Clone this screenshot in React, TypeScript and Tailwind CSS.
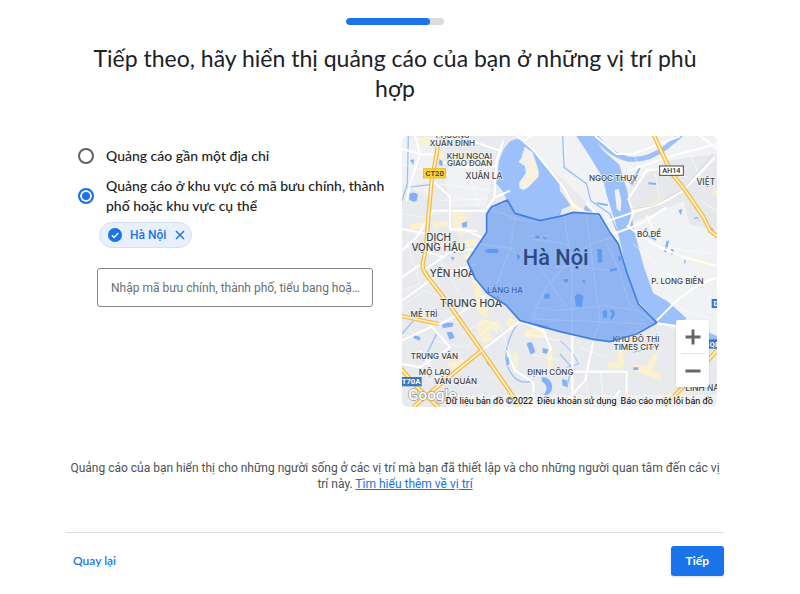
import { useState } from "react";

const labels = [
  { text: "PHƯỜNG", x: 158, y: 12, size: 23 },
  { text: "XUÂN ĐỈNH", x: 157, y: 35, size: 24 },
  { text: "KHU NGOẠI", x: 208, y: 74, size: 24 },
  { text: "GIAO ĐOÀN", x: 209, y: 96, size: 24 },
  { text: "XUÂN LA", x: 252, y: 134, size: 25 },
  { text: "NGỌC THỤY", x: 640, y: 141, size: 24 },
  { text: "VIỆT H", x: 930, y: 152, size: 25 },
  { text: "BỒ ĐỀ", x: 747, y: 308, size: 24 },
  { text: "DỊCH", x: 116, y: 320, size: 30 },
  { text: "VỌNG HẬU", x: 115, y: 350, size: 30 },
  { text: "YÊN HOÀ", x: 157, y: 429, size: 30 },
  { text: "TRUNG HOÀ", x: 213, y: 518, size: 31 },
  { text: "LÁNG HẠ", x: 315, y: 476, size: 24 },
  { text: "MỄ TRÌ", x: 72, y: 550, size: 24 },
  { text: "P. LONG BIÊN", x: 832, y: 449, size: 24 },
  { text: "TRUNG VĂN", x: 103, y: 676, size: 24 },
  { text: "MỘ LAO", x: 104, y: 723, size: 24 },
  { text: "VĂN QUÁN", x: 167, y: 750, size: 24 },
  { text: "ĐỊNH CÔNG", x: 451, y: 723, size: 24 },
  { text: "KHU ĐÔ THỊ", x: 708, y: 625, size: 24 },
  { text: "TIMES CITY", x: 709, y: 647, size: 24 },
  { text: "LINH NAM", x: 918, y: 771, size: 25 },
];

const streets = [
  "M6 45 L70 62 L112 60",
  "M45 6 L60 60 L30 150 L20 200",
  "M180 6 L240 30 L300 50",
  "M128 84 L180 100 L290 96",
  "M98 140 L150 188 L150 285 L232 292",
  "M88 230 L262 230",
  "M310 20 L290 80 L286 130 L284 190 L258 225",
  "M286 190 L330 170",
  "M6 285 L82 300 L82 355 L135 370",
  "M150 288 L190 285 L245 310",
  "M6 350 L50 310 L100 230",
  "M60 392 L6 430 M70 410 L150 355 L220 345",
  "M6 500 L110 425 L230 390",
  "M120 570 L170 545 L262 480",
  "M6 620 L90 580 L115 568",
  "M6 690 L60 700 L150 640 L80 560",
  "M60 650 L120 740 L190 700",
  "M245 650 L360 562 L430 590 L455 650",
  "M320 650 L345 710 L400 745 L400 819",
  "M517 590 L517 819 M517 713 L680 713 L680 780",
  "M580 622 L555 740 L500 800",
  "M660 770 L620 819",
  "M770 566 L720 590 L660 625",
  "M352 6 L400 48 L450 110 L490 160 L520 215 L560 235 L600 240",
  "M372 20 L395 6",
  "M610 265 L700 235 L790 205 L850 170 L945 70",
  "M640 300 L720 270 L800 220",
  "M560 205 L605 260 L645 310",
  "M685 280 L700 235 L685 195 L740 110 L780 105",
  "M680 112 L800 70 L951 30",
  "M585 6 L650 60 L700 60 L840 6",
  "M900 6 L951 45",
  "M680 275 L760 330 L850 370 L951 395",
  "M740 245 L775 320",
  "M770 560 L830 500 L900 450 L951 430",
  "M850 440 L800 420",
  "M770 568 L830 576 L951 640",
];

const innerStreets = [
  "M265 225 L315 240 L345 255 L420 265 L470 252",
  "M240 330 L345 345 M350 230 L330 345 L290 450",
  "M385 305 L440 310 M400 315 L500 330 L510 345",
  "M465 400 L520 395 L640 410",
  "M398 560 L410 520 L440 460 L500 390 L570 330 L640 310",
  "M385 350 L480 490 L500 520",
  "M515 590 L515 400 L495 255",
  "M580 615 L600 560 L560 250",
  "M620 330 L650 390 L690 510 L760 565",
  "M400 520 L470 530 L620 515 L715 530",
  "M400 555 L520 560 L740 570",
  "M600 245 L640 320",
];

const highways = [
  "M117 0 L110 60 L95 140 L85 250 L78 340 L68 390 Q66 408 86 432 L150 515 L245 650 L345 795 L360 819",
  "M0 545 L115 570",
  "M243 651 L130 743 L40 819",
  "M0 700 L50 758 L115 819",
  "M760 0 L782 48 L815 118 L855 168 L910 248 L930 290 L960 312",
  "M960 640 L860 748 L790 819",
];

const blocks =
  "M55 10 l25 -4 l8 22 l-25 8z M110 55 l22 5 l-6 25 l-18 -5z M170 85 l40 8 l-4 14 l-35 -6z " +
  "M30 270 l50 -8 l2 16 l-50 10z M100 265 l45 -5 l0 16 l-45 5z M160 235 l30 -6 l12 30 l-22 18 l18 20 l-18 10 l-22 -28z " +
  "M180 325 l48 -12 l2 18 l-48 14z M190 365 l20 -10 l12 20 l-20 14z M215 430 l18 4 l15 50 l20 28 l-10 42 l-26 -22z " +
  "M230 585 l10 -30 l60 10 l-6 30 l-24 -10 l-10 20 l-20 0z M240 610 l30 -12 l8 18 l-30 14z " +
  "M320 550 l25 6 l-5 34 l-18 -14z M372 590 l45 -8 l28 14 l-8 16 l-62 -2z M440 640 l14 -4 l6 80 l-14 4z " +
  "M340 650 l15 10 l0 50 l-15 -10z M140 690 l50 -14 l14 16 l-44 16z M388 50 l24 40 l2 40 l-24 24 l-20 0 l28 -44z " +
  "M425 80 l16 10 l50 65 l-10 8z M480 180 l30 12 l40 40 l-4 6 l-30 -8 l-26 -30z M700 225 l60 -17 l4 8 l-60 17z " +
  "M760 205 l35 -12 l2 10 l-34 12z M940 165 l12 4 l0 16 l-12 -2z M880 370 l50 12 l-2 14 l-50 -12z " +
  "M655 645 l40 -20 l10 14 l-40 24 l10 30 l-18 14 l-36 -8 l4 -16 l28 2z M700 690 l38 8 l24 -40 l14 8 l-20 38 l30 22 l-4 14 l-78 -30z " +
  "M772 782 l80 -6 l10 30 l-88 8z M380 795 l50 0 l0 24 l-50 0z M500 790 l40 -4 l0 33 l-36 0z";

const ponds =
  "M28 180 q12 -10 26 2 l-4 18 l-8 4 l-14 -6z M118 75 l12 8 l-4 14 l-10 -6z M30 78 l12 -2 l-2 18z M185 268 l16 -6 l0 16 l-12 4z " +
  "M152 368 l12 2 l-6 10z M125 572 q20 -10 36 -4 l-4 10 l-28 4z M140 595 l16 -2 l8 18 l-16 6z M42 602 l20 8 l-4 10 l-18 -8z " +
  "M380 630 q12 -12 18 0 l8 24 l-14 8z M428 642 l18 4 l-6 14 l-12 -4z M425 730 q26 -2 32 28 q-4 28 -26 26 q20 -26 -6 -42z " +
  "M316 670 l10 0 l2 22 l-8 2z M262 670 l8 4 l-2 22 l-8 -8z M486 735 l14 4 l4 20 l-16 -4z M700 700 l16 0 l-2 8 l-14 0z " +
  "M745 145 l24 2 l-2 6 l-22 -2z M690 150 l30 -55 l4 2 l-26 55z M835 230 l12 -6 l-4 20z M880 255 q14 -16 20 10 l-6 -12z " +
  "M800 320 l8 0 l-10 36 l-6 -4z M812 345 l8 0 l2 16 l-8 0z M852 378 l6 2 l-4 12z M590 205 l35 6 l-4 5 l-30 -6z " +
  "M918 265 l24 24 l-4 4 l-22 -22z M740 300 l30 15 l-2 5 l-30 -14z";

const innerPonds =
  "M255 348 q24 -8 42 0 l-4 10 l-36 -2z M350 360 l12 6 l-8 14z M405 305 l14 0 l0 8 l-12 0z M425 308 l14 2 l-2 8z " +
  "M432 485 q10 -14 18 -2 l-4 12 l-14 -2z M592 345 l12 0 l4 38 l-14 4z M524 490 l8 -12 l18 8 l-4 34 l-18 -4z " +
  "M630 528 q16 -4 14 14 l-10 16 l-4 -4 l6 -14z M608 532 l12 -4 l2 22 l-12 2z M545 438 l12 2 l-4 10z M630 405 l20 -4 l2 8 l-22 4z " +
  "M490 435 l14 0 l0 10 l-12 0z M405 568 l40 10 l-4 6 l-36 -10z M655 365 l8 4 l-2 12 l-6 -2z";

const areaOutline =
  "M322 198 L345 238 L420 260 L480 247 L520 235 L597 240 L630 295 L655 330 L680 415 L715 510 L770 566 L710 600 L630 623 L580 616 L480 593 L360 560 L318 513 L262 478 L225 433 L202 382 L260 295 L260 240 L275 218 Z";

function CityMap() {
  return (
    <svg viewBox="6 6 945 813" className="block w-full" role="img" aria-label="Hà Nội">
      <rect x="0" y="0" width="960" height="830" fill="#e8eaed" />
      <path d="M345 0 L960 0 L960 640 L770 565 L660 330 L600 240 L480 130 Z" fill="#f1f2f4" />
      <path d="M690 150 L800 80 L951 60 L951 290 L870 270 L850 200 L690 270 Z" fill="#e6e8eb" />
      <path d="M6 10 L120 10 L90 190 L6 150 Z M130 100 L280 90 L258 220 L150 220 Z" fill="#f0f1f4" />
      <path d={blocks} fill="#fcf1cf" />

      <g fill="#9bc0fa">
        <path d="M350 14 L330 22 L312 44 L297 80 L292 130 L288 148 L306 168 L322 200 L345 238 L420 260 L480 247 L486 225 L512 215 L495 190 L480 172 L478 140 L436 96 L410 62 L376 22 Z" />
        <path d="M548 234 L556 214 L578 234 Z" />
        <path d="M525 0 L565 60 L607 130 L622 190 L645 260 L662 330 L680 415 L715 503 L770 565 L832 575 L860 553 L800 500 L760 478 L748 445 L732 400 L705 300 L692 230 L682 170 L658 92 L610 50 L575 0 Z" />
        <path d="M925 595 L951 606 L951 650 L925 630 Z" />
        <path d={ponds} fill="#86b1f5" />
      </g>
      <path
        d="M374 38 L398 55 L416 110 L416 128 L385 160 L370 168 L358 162 L358 145 L378 116 L374 96 L356 84 L364 72 Z"
        fill="#eff0f2"
      />
      <path d="M386 60 L408 96 L410 126 L376 156 L366 150 L390 116 Z" fill="#fbf2d8" />
      <path d="M644 168 L656 165 L664 200 L662 234 L650 225 Z" fill="#f1f2f4" />
      <g fill="none" stroke="#9bc0fa">
        <path d="M582 0 Q625 60 680 74 Q740 84 800 38 L845 0" strokeWidth="15" />
        <path d="M488 6 L492 100 L560 150 L572 200 L630 240 L650 290" strokeWidth="4" />
        <path d="M25 6 L22 150 L6 200 M22 160 L90 152 M40 560 L6 600 M110 600 L70 680" strokeWidth="4" />
        <path d="M355 565 Q310 630 320 690 Q345 760 400 740 M480 660 L515 700 L500 760" strokeWidth="4" />
        <path d="M700 655 L760 640 L770 600 M480 620 Q520 650 535 690 L500 700" strokeWidth="3" />
      </g>

      <g fill="none" stroke="#ffffff" strokeWidth="6" strokeLinejoin="round">
        {streets.map((d) => (
          <path key={d} d={d} />
        ))}
      </g>
      <g fill="none" stroke="#ffffff" strokeWidth="2" opacity="0.8">
        <path d="M6 90 L80 110 M120 150 L280 170 M120 200 L260 195 M200 100 L240 220 M6 240 L80 250 M20 320 L60 450 L6 470 M120 380 L180 480 M6 520 L70 470 L130 490 M180 600 L260 560 M100 620 L190 640 M200 640 L290 560 M300 580 L340 680 M270 740 L330 690 M380 600 L480 620 M390 660 L480 680 M540 640 L620 670 M560 700 L560 800 M600 710 L610 800 M700 60 L720 100 L860 130 M760 90 L780 200 M870 60 L900 130 M900 200 L951 230 M700 330 L780 400 M790 340 L951 360 M790 470 L850 530 L951 560" />
      </g>
      <path d="M690 225 L760 215 L850 165 L940 60" fill="none" stroke="#cfd2d7" strokeWidth="2" />

      <g fill="none" strokeLinejoin="round">
        {highways.map((d) => (
          <g key={d}>
            <path d={d} stroke="#f8ba42" strokeWidth="13" />
            <path d={d} stroke="#fff3d0" strokeWidth="5" />
          </g>
        ))}
      </g>

      <g
        fontFamily="Inter, Roboto, sans-serif"
        fontWeight="500"
        textAnchor="middle"
        fill="#3f4348"
        stroke="#f5f6f7"
        strokeWidth="4"
        paintOrder="stroke"
      >
        {labels.map((label) => (
          <text key={label.text} x={label.x} y={label.y} fontSize={label.size}>
            {label.text}
          </text>
        ))}
      </g>

      <path d={areaOutline} fill="#4285f4" fillOpacity="0.53" />
      <g fill="none" stroke="#a3c4f6" strokeWidth="4" opacity="0.6">
        {innerStreets.map((d) => (
          <path key={d} d={d} />
        ))}
      </g>
      <path d={innerPonds} fill="#6099f0" />
      <path d={areaOutline} fill="none" stroke="#4080e2" strokeWidth="5" strokeLinejoin="round" />

      <g fontFamily="Roboto, sans-serif" fontWeight="500" textAnchor="middle">
        <text x="467" y="392" fontSize="65" fill="#2b4a80">
          Hà Nội
        </text>
        <rect x="70" y="104" width="67" height="28" fill="#fbd22e" stroke="#d9b31c" strokeWidth="2" />
        <text x="104" y="126" fontSize="23" fill="#3b3a2c">
          CT20
        </text>
        <rect x="779" y="96" width="71" height="28" fill="#ffffff" stroke="#4a4a4a" strokeWidth="3" />
        <text x="814" y="118" fontSize="22" fill="#303030">
          AH14
        </text>
        <g fill="#3a78c3">
          <rect x="0" y="729" width="65" height="28" />
          <rect x="935" y="495" width="30" height="27" />
          <rect x="922" y="616" width="40" height="28" />
        </g>
        <g fill="#ffffff" fontSize="23" fontWeight="700">
          <text x="33" y="751">
            T70A
          </text>
          <text x="948" y="517">
            D
          </text>
          <text x="943" y="638">
            QL
          </text>
        </g>
        <text x="97" y="799" fontSize="46" fill="#ffffff" stroke="#8f9296" strokeWidth="4" paintOrder="stroke">
          Google
        </text>
      </g>
    </svg>
  );
}

function MapPanel() {
  return (
    <div className="relative overflow-hidden rounded-md">
      <CityMap />
      <div className="absolute right-2 bottom-5 flex w-[33px] flex-col items-center rounded-xs bg-white shadow">
        <button aria-label="Phóng to" className="flex h-[33px] w-full items-center justify-center">
          <svg viewBox="0 0 16 16" className="size-4" fill="#666666">
            <path d="M6.5 0.5 h3 v6 h6 v3 h-6 v6 h-3 v-6 h-6 v-3 h6z" />
          </svg>
        </button>
        <span className="h-px w-6 bg-[#e6e6e6]" />
        <button aria-label="Thu nhỏ" className="flex h-[33px] w-full items-center justify-center">
          <svg viewBox="0 0 16 16" className="size-4" fill="#666666">
            <path d="M0.5 6.5 h15 v3 h-15z" />
          </svg>
        </button>
      </div>
      <div className="absolute right-0 bottom-0 flex gap-1 bg-[#f5f5f5]/60 pr-1 text-[9px] leading-[12px] whitespace-nowrap text-black">
        <span>Dữ liệu bản đồ ©2022</span>
        <a href="#terms">Điều khoản sử dụng</a>
        <a href="#report">Báo cáo một lỗi bản đồ</a>
      </div>
    </div>
  );
}

const radioClass =
  "size-4 shrink-0 appearance-none rounded-full border-2 border-[#5f6368] bg-white checked:border-[#1a73e8] checked:bg-[#1a73e8] checked:shadow-[inset_0_0_0_2px_#fff]";

function App() {
  const [mode, setMode] = useState("area");
  const [query, setQuery] = useState("");

  return (
    <div className="min-h-screen bg-white pr-[10px] font-['Roboto',sans-serif] text-[#202124]">
      <main className="mx-auto max-w-[658px] pt-[18px]">
        <div className="mx-auto h-[7px] w-[98px] overflow-hidden rounded-full bg-[#dadce0]">
          <div className="h-full w-[84px] rounded-full bg-[#1a73e8]" />
        </div>

        <h1 className="mt-[18px] px-4 text-center font-['Lato',sans-serif] text-[23px] leading-[30px]">
          Tiếp theo, hãy hiển thị quảng cáo của bạn ở những vị trí phù hợp
        </h1>

        <div className="mt-[33px] flex items-start pr-[7px] pl-3">
          <div className="min-w-0 flex-1 pt-[10px] font-['Lato',sans-serif] text-sm font-medium">
            <label className="flex items-center gap-3 leading-5">
              <input
                type="radio"
                name="mode"
                className={radioClass}
                checked={mode === "address"}
                onChange={() => setMode("address")}
              />
              Quảng cáo gần một địa chỉ
            </label>
            <label className="mt-[10px] flex items-center gap-3 pr-3 leading-5">
              <input
                type="radio"
                name="mode"
                className={radioClass}
                checked={mode === "area"}
                onChange={() => setMode("area")}
              />
              Quảng cáo ở khu vực có mã bưu chính, thành phố hoặc khu vực cụ thể
            </label>

            <div className="mt-[6px] ml-[21px] flex h-[26px] w-fit items-center rounded-full border border-[#d5e0f0] bg-[#e8f0fe] pr-[5px] pl-2 font-['Roboto',sans-serif] text-xs font-medium text-[#1a73e8]">
              <svg viewBox="0 0 14 14" className="size-[14px]">
                <circle cx="7" cy="7" r="7" fill="#1a73e8" />
                <path d="M3.8 7.2 L6 9.4 L10.3 4.9" fill="none" stroke="#ffffff" strokeWidth="1.4" />
              </svg>
              <span className="ml-2">Hà Nội</span>
              <button aria-label="Xóa Hà Nội" className="ml-2">
                <svg viewBox="0 0 12 12" className="size-3">
                  <path d="M2 2 L10 10 M10 2 L2 10" stroke="#1a73e8" strokeWidth="1.5" />
                </svg>
              </button>
            </div>

            <div className="mt-5 mr-[29px] ml-[19px]">
              <input
                type="text"
                aria-label="Nhập mã bưu chính, thành phố, tiểu bang hoặc quốc gia"
                placeholder="Nhập mã bưu chính, thành phố, tiểu bang hoặc quốc gia"
                value={query}
                onChange={(e) => setQuery(e.target.value)}
                className="block h-[39px] w-full rounded-[3px] border border-[#80868b] pr-2 pl-[13px] font-['Roboto',sans-serif] text-xs font-normal text-ellipsis placeholder:text-[#6b6f73]"
              />
            </div>
          </div>

          <div className="w-[315px] shrink-0">
            <MapPanel />
          </div>
        </div>

        <p className="mt-[53px] text-center text-xs leading-4 text-[#4d5156]">
          Quảng cáo của bạn hiển thị cho những người sống ở các vị trí mà bạn đã thiết lập và cho những người quan tâm đến các vị trí này.{" "}
          <a href="#learn" className="text-[#1a73e8] underline">
            Tìm hiểu thêm về vị trí
          </a>
        </p>

        <div className="mt-10 flex items-center justify-between border-t border-[#dadce0] pt-[13px] font-['Lato',sans-serif] text-xs">
          <button className="px-[7px] font-semibold text-[#1a73e8]">Quay lại</button>
          <button className="h-[30px] rounded-[3px] bg-[#1a73e8] px-[15px] font-bold text-white shadow">
            Tiếp
          </button>
        </div>
      </main>
    </div>
  );
}

export default App;
